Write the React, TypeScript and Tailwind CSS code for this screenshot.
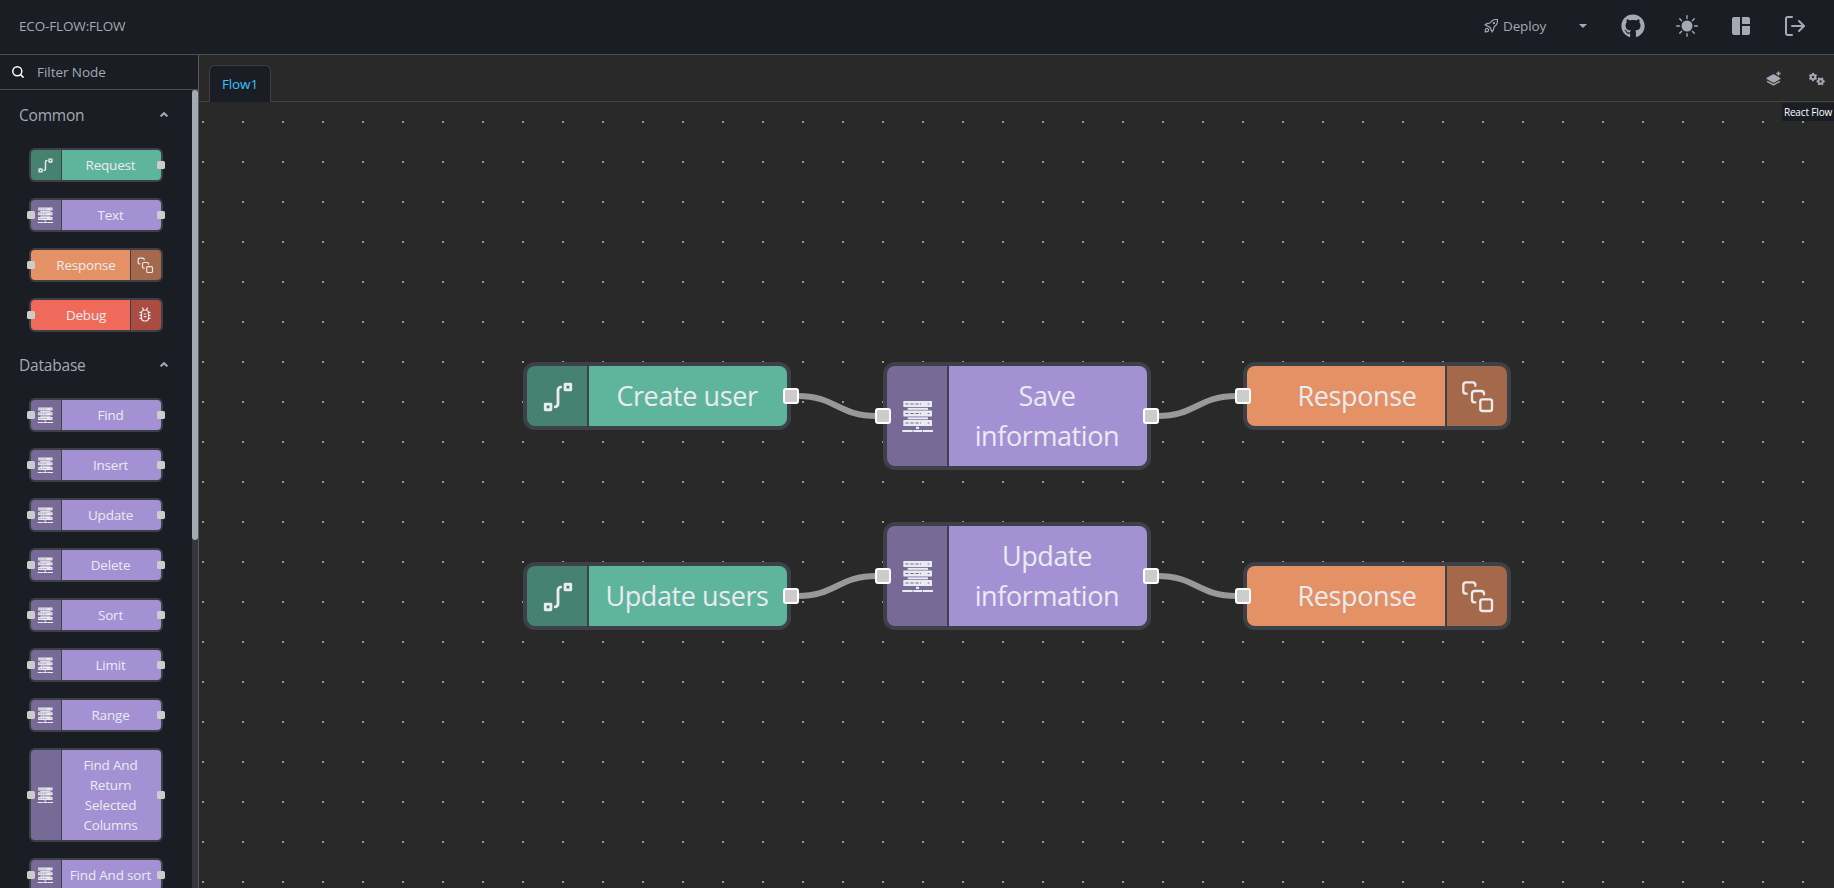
import type { ReactNode } from "react";
import { BiSolidLayerPlus } from "react-icons/bi";
import { BsSunFill } from "react-icons/bs";
import { FaGithub } from "react-icons/fa";
import { FaGears } from "react-icons/fa6";
import { FiLogOut } from "react-icons/fi";
import { GrDeploy } from "react-icons/gr";
import { MdSpaceDashboard } from "react-icons/md";
import { TbRouteSquare2 } from "react-icons/tb";

type Kind = "request" | "server" | "response" | "debug";

function ServerIcon() {
  return (
    <svg viewBox="93 150 96 96" className="size-4" fill="currentColor">
      {[153, 181.5, 210].map((y) => (
        <g key={y}>
          <rect x="100" y={y} width="86" height="18" />
          <path
            d={`M106 ${y + 9}h10m5 0h10m5 0h10m4 0h3m20 0h5`}
            stroke="#786a97"
            strokeWidth="3.5"
            fill="none"
          />
        </g>
      ))}
      <rect x="113" y="173.5" width="61" height="6" />
      <rect x="113" y="202" width="61" height="6" />
      <rect x="138" y="230" width="9" height="7" />
      <path d="M97 240h31v6H97zM130 240h27v6h-27zM159 240h30v6h-30z" />
    </svg>
  );
}

function ResponseIcon() {
  return (
    <svg
      viewBox="723 90 96 96"
      className="size-4 overflow-visible"
      fill="none"
      stroke="currentColor"
      strokeWidth="7"
      strokeLinecap="round"
      strokeLinejoin="round"
    >
      <path d="M740 131h-3q-7 0-7-7v-19q0-8 8-8h20q8 0 8 8v2" />
      <path d="M766 157h-3q-7 0-7-7v-19q0-8 8-8h20q8 0 8 8v2" />
      <rect x="781" y="148" width="35" height="35" rx="6" />
    </svg>
  );
}

function BugIcon() {
  return (
    <svg viewBox="412 533 48 48" className="size-4" fill="none" stroke="currentColor" strokeWidth="3.6">
      <rect x="425.5" y="542" width="21" height="33" rx="10" />
      <path d="m428 535 4 7m12-7-4 7M419.5 549h6m-6 9h6m-6 9h6m21-18h6m-6 9h6m-6 9h6M432 554h8m-8 8h8" />
    </svg>
  );
}

const kinds: Record<
  Kind,
  { body: string; band: string; icon: ReactNode; iconRight?: boolean; input: boolean; output: boolean }
> = {
  request: {
    body: "bg-[#5fb49c]",
    band: "bg-[#468270]",
    icon: <TbRouteSquare2 className="size-[17px]" />,
    input: false,
    output: true,
  },
  server: { body: "bg-[#a491d3]", band: "bg-[#786a97]", icon: <ServerIcon />, input: true, output: true },
  response: {
    body: "bg-[#e49165]",
    band: "bg-[#a4684a]",
    icon: <ResponseIcon />,
    iconRight: true,
    input: true,
    output: false,
  },
  debug: {
    body: "bg-[#ef6a5b]",
    band: "bg-[#ab4c42]",
    icon: <BugIcon />,
    iconRight: true,
    input: true,
    output: false,
  },
};

function Handle({ side, onCanvas }: { side: "left" | "right"; onCanvas?: boolean }) {
  const place = onCanvas
    ? side === "left"
      ? "-left-1.5 border border-white"
      : "-right-1.5 border border-white"
    : side === "left"
      ? "-left-1"
      : "-right-1";
  return <span className={`absolute top-1/2 -mt-1 size-2 rounded-[1.5px] bg-[#cccccc] ${place}`} />;
}

function FlowNode({ kind, label, onCanvas }: { kind: Kind; label: string; onCanvas?: boolean }) {
  const k = kinds[kind];
  return (
    <div className="relative flex w-[134px] shrink-0 rounded-[6px] border-2 border-[#3d4046] bg-[#3d4046] text-[#e9ebf0]">
      <div className={`flex min-h-[30px] w-full gap-px overflow-hidden rounded-[4px] ${k.iconRight ? "flex-row-reverse" : ""}`}>
        <div className={`flex w-[30px] shrink-0 items-center justify-center ${onCanvas ? "" : "pr-[2px]"} ${k.band}`}>
          {k.icon}
        </div>
        <div
          className={`flex flex-1 items-center justify-center py-[5px] text-center text-[13.5px] leading-5 tracking-[-0.2px] ${k.body} ${k.iconRight ? "pl-[11px]" : onCanvas ? "pr-px" : "pr-[2px]"}`}
        >
          <span className={label.length > 20 ? "w-[70px]" : label.endsWith("information") ? "w-20" : "whitespace-nowrap"}>
            {label}
          </span>
        </div>
      </div>
      {k.input && <Handle side="left" onCanvas={onCanvas} />}
      {k.output && <Handle side="right" onCanvas={onCanvas} />}
    </div>
  );
}

function Section({ title, nodes }: { title: string; nodes: { kind: Kind; label: string }[] }) {
  return (
    <section>
      <h2 className="flex h-[50px] items-center justify-between pt-[2px] pr-6 pl-[19px] text-[15.5px] tracking-[-0.2px]">
        {title}
        <svg viewBox="0 0 8 5" className="mb-[3px] h-[5px] w-2" fill="none" stroke="currentColor" strokeWidth="2">
          <path d="M0.6 4.4 4 1.2 7.4 4.4" />
        </svg>
      </h2>
      <div className="flex flex-col gap-4 py-2 pl-[29px]">
        {nodes.map((n) => (
          <FlowNode key={n.label} {...n} />
        ))}
      </div>
    </section>
  );
}

const common: { kind: Kind; label: string }[] = [
  { kind: "request", label: "Request" },
  { kind: "server", label: "Text" },
  { kind: "response", label: "Response" },
  { kind: "debug", label: "Debug" },
];

const database = [
  "Find",
  "Insert",
  "Update",
  "Delete",
  "Sort",
  "Limit",
  "Range",
  "Find And Return Selected Columns",
  "Find And sort",
].map((label) => ({ kind: "server" as Kind, label }));

const flow: { kind: Kind; label: string; x: number; y: number }[] = [
  { kind: "request", label: "Create user", x: 162, y: 130 },
  { kind: "server", label: "Save information", x: 342, y: 130 },
  { kind: "response", label: "Response", x: 522, y: 130 },
  { kind: "request", label: "Update users", x: 162, y: 230 },
  { kind: "server", label: "Update information", x: 342, y: 210 },
  { kind: "response", label: "Response", x: 522, y: 230 },
];

const edges = [
  [300, 147, 338, 157],
  [480, 157, 518, 147],
  [300, 247, 338, 237],
  [480, 237, 518, 247],
];

function Canvas() {
  return (
    <div className="relative flex-1 overflow-hidden">
      <svg className="absolute inset-0 size-full">
        <defs>
          <pattern id="dots" x="3" y="19" width="40" height="40" patternUnits="userSpaceOnUse">
            <rect width="2" height="2" fill="#949494" />
          </pattern>
        </defs>
        <rect width="100%" height="100%" fill="url(#dots)" />
      </svg>
      <div className="absolute top-0 left-0 origin-top-left scale-200">
        <svg className="absolute top-0 left-0 h-[400px] w-[800px]" fill="none" stroke="#999999" strokeWidth="3">
          {edges.map(([x1, y1, x2, y2]) => (
            <path key={`${x1}-${y1}`} d={`M${x1 - 1} ${y1}C${(x1 + x2) / 2} ${y1} ${(x1 + x2) / 2} ${y2} ${x2 + 1} ${y2}`} />
          ))}
        </svg>
        {flow.map((n) => (
          <div key={`${n.x}-${n.y}`} className="absolute" style={{ left: n.x, top: n.y }}>
            <FlowNode kind={n.kind} label={n.label} onCanvas />
          </div>
        ))}
      </div>
      <div className="absolute top-px right-0 flex h-[18px] w-[52px] items-center justify-center bg-[#1a1d24] text-[10px] tracking-[-0.15px] whitespace-nowrap text-white">
        React Flow
      </div>
    </div>
  );
}

export default function App() {
  return (
    <div className="flex h-[888px] w-full flex-col overflow-hidden bg-[#292929] font-['Open_Sans','Noto_Sans',sans-serif] text-[13.5px] text-[#a4a9b3]">
      <header className="flex h-[55px] shrink-0 items-center justify-between border-b border-[#4d4d4d] bg-[#1a1d24] pr-[27px] pb-[2px] pl-[19px]">
        <h1 className="tracking-[-0.15px]">ECO-FLOW:FLOW</h1>
        <div className="flex items-center">
          <GrDeploy className="size-3.5" />
          <span className="ml-[5px] w-[43px] tracking-[-0.15px]">Deploy</span>
          <svg viewBox="0 0 8 4" className="mr-[34px] ml-[33px] h-1 w-2" fill="currentColor">
            <path d="M0 0h8L4 4z" />
          </svg>
          <div className="flex items-center gap-[30px]">
            <FaGithub className="size-6" />
            <span className="flex size-6 items-center justify-center">
              <BsSunFill className="size-[22px]" />
            </span>
            <MdSpaceDashboard className="size-6" />
            <FiLogOut className="size-6" />
          </div>
        </div>
      </header>
      <div className="flex min-h-0 flex-1">
        <aside className="flex w-[199px] shrink-0 flex-col border-r border-[#5a5a5a] bg-[#1a1d24]">
          <label className="flex h-[35px] shrink-0 items-center gap-[13px] border-b border-[#4d4d4d] pl-3">
            <svg viewBox="0 0 12 12" className="size-3" fill="none" stroke="#ffffff" strokeWidth="1.5">
              <circle cx="5.3" cy="5.3" r="4.5" />
              <path d="m8.6 8.6 3 3" />
            </svg>
            <span className="tracking-[-0.05px]">Filter Node</span>
          </label>
          <div className="flex min-h-0 flex-1">
            <div className="min-w-0 flex-1 overflow-hidden">
              <Section title="Common" nodes={common} />
              <Section title="Database" nodes={database} />
            </div>
            <div className="w-1.5 bg-[#34373f]">
              <div className="h-[450px] rounded-full bg-[#a4a9b3]" />
            </div>
          </div>
        </aside>
        <main className="flex min-w-0 flex-1 flex-col">
          <div className="flex h-[47px] shrink-0 items-end justify-between border-b border-[#434343] pr-[9px] pl-2.5">
            <div className="-mb-px flex h-[37px] w-[62px] items-center justify-center rounded-t-[6px] border border-b-0 border-[#3c3f43] bg-[#1a1d24] tracking-[-0.1px] text-[#34c3ff]">
              Flow1
            </div>
            <div className="flex h-full items-center gap-[27px] pt-px">
              <BiSolidLayerPlus className="size-[17px]" />
              <FaGears className="size-4" />
            </div>
          </div>
          <Canvas />
        </main>
      </div>
    </div>
  );
}
